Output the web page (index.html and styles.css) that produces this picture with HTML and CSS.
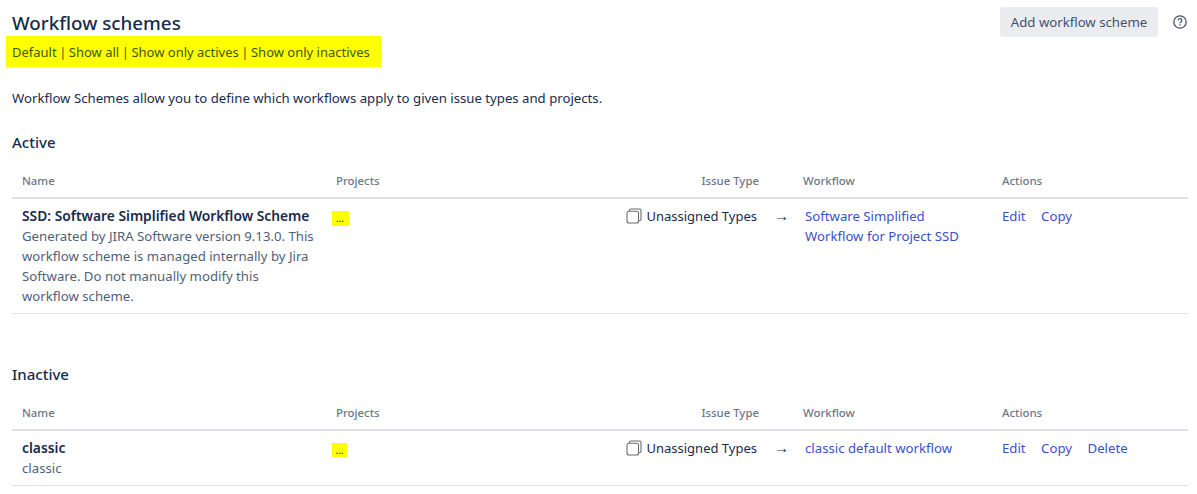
FILE: index.html
```html
<!DOCTYPE html>
<html lang="en">
<head>
  <meta charset="UTF-8">
  <title>Workflow schemes</title>
  <link rel="stylesheet" href="styles.css">
</head>
<body>

  <!-- Header -->
  <div class="page-header">
    <div class="header-main">
      <h1>Workflow schemes</h1>
      <div class="filters">
        <a href="#">Default</a><span class="sep">|</span><a href="#">Show all</a><span class="sep">|</span><a href="#">Show only actives</a><span class="sep">|</span><a href="#">Show only inactives</a>
      </div>
    </div>
    <div class="header-actions">
      <button class="add-btn">Add workflow scheme</button>
      <svg class="help-icon" width="16" height="16" viewBox="0 0 16 16" fill="none">
        <circle cx="8" cy="8" r="6.2" stroke="#42526e" stroke-width="1.3"/>
        <path d="M6.1 6.5c0-1.1.9-1.8 1.9-1.8s1.9.7 1.9 1.7c0 1.5-1.9 1.5-1.9 2.9" stroke="#42526e" stroke-width="1.2"/>
        <circle cx="8" cy="11" r=".8" fill="#42526e"/>
      </svg>
    </div>
  </div>

  <p class="intro">Workflow Schemes allow you to define which workflows apply to given issue types and projects.</p>

  <!-- Active -->
  <h2>Active</h2>
  <table>
    <thead>
      <tr>
        <th class="col-name">Name</th>
        <th class="col-projects">Projects</th>
        <th class="col-issue">Issue Type</th>
        <th class="col-arrow"></th>
        <th class="col-workflow">Workflow</th>
        <th class="col-actions">Actions</th>
      </tr>
    </thead>
    <tbody>
      <tr>
        <td>
          <strong>SSD: Software Simplified Workflow Scheme</strong>
          <div class="desc">Generated by JIRA Software version 9.13.0. This workflow scheme is managed internally by Jira Software. Do not manually modify this workflow scheme.</div>
        </td>
        <td class="projects"><span class="dots wide">...</span></td>
        <td class="issue">
          <span class="issue-type">
            <svg width="16" height="16" viewBox="0 0 16 16" fill="none" stroke="#6b6b6b" stroke-width="1.1">
              <rect x="1" y="3.2" width="11.5" height="11.8" rx="2"/>
              <path d="M3.4 3.1V2.6A1.6 1.6 0 0 1 5 1h8.4A1.6 1.6 0 0 1 15 2.6v8.6a1.6 1.6 0 0 1-1.6 1.5h-.8"/>
            </svg>
            Unassigned Types
          </span>
        </td>
        <td class="arrow">&rarr;</td>
        <td class="workflow"><a href="#">Software Simplified Workflow for Project SSD</a></td>
        <td class="actions"><a href="#">Edit</a><a href="#">Copy</a></td>
      </tr>
    </tbody>
  </table>

  <!-- Inactive -->
  <h2 class="inactive-title">Inactive</h2>
  <table>
    <thead>
      <tr>
        <th class="col-name">Name</th>
        <th class="col-projects">Projects</th>
        <th class="col-issue">Issue Type</th>
        <th class="col-arrow"></th>
        <th class="col-workflow">Workflow</th>
        <th class="col-actions">Actions</th>
      </tr>
    </thead>
    <tbody>
      <tr>
        <td>
          <strong>classic</strong>
          <div class="desc">classic</div>
        </td>
        <td class="projects"><span class="dots">...</span></td>
        <td class="issue">
          <span class="issue-type">
            <svg width="16" height="16" viewBox="0 0 16 16" fill="none" stroke="#6b6b6b" stroke-width="1.1">
              <rect x="1" y="3.2" width="11.5" height="11.8" rx="2"/>
              <path d="M3.4 3.1V2.6A1.6 1.6 0 0 1 5 1h8.4A1.6 1.6 0 0 1 15 2.6v8.6a1.6 1.6 0 0 1-1.6 1.5h-.8"/>
            </svg>
            Unassigned Types
          </span>
        </td>
        <td class="arrow">&rarr;</td>
        <td class="workflow"><a href="#">classic default workflow</a></td>
        <td class="actions"><a href="#">Edit</a><a href="#">Copy</a><a href="#">Delete</a></td>
      </tr>
    </tbody>
  </table>

</body>
</html>
```

FILE: styles.css
```css
* {
  box-sizing: border-box;
}
body {
  font-family: "Noto Sans", Arial, sans-serif;
  font-size: 13.2px;
  line-height: 20px;
  color: #172b4d;
  background: #fff;
  margin: 0;
  padding: 7px 9px 0 12px;
  overflow: hidden;
}
a {
  color: #3b51c9;
  text-decoration: none;
}
.page-header {
  display: flex;
  justify-content: space-between;
  align-items: flex-start;
}
h1 {
  font-size: 18.8px;
  font-weight: 500;
  line-height: 32px;
  margin: 0;
}
.filters {
  background: #ffff00;
  margin: -3px 0 0 -6px;
  padding: 6px 11px 5px 6px;
  font-size: 13px;
  color: #4a5a00;
}
.filters a {
  color: #3c5a00;
}
.sep {
  margin: 0 2.5px;
}
.header-actions {
  display: flex;
  align-items: center;
  gap: 14px;
}
.add-btn {
  font: inherit;
  color: #42526e;
  background: #ebecf0;
  border: none;
  border-radius: 3px;
  height: 30px;
  width: 158px;
  padding: 0;
}
.help-icon {
  display: block;
}
.intro {
  margin: 21px 0 0;
}
h2 {
  font-size: 15px;
  font-weight: 500;
  line-height: 20px;
  margin: 24px 0 0;
}
.inactive-title {
  margin-top: 50px;
}
table {
  width: 1176px;
  border-collapse: collapse;
  table-layout: fixed;
  margin-top: 9px;
}
th {
  font-size: 11.4px;
  font-weight: 500;
  color: #6b778c;
  text-align: left;
  padding: 10px 10px 6px;
  border-bottom: 2px solid #dfe1e6;
}
td {
  vertical-align: top;
  padding: 7px 10px;
  border-bottom: 1px solid #dfe1e6;
}
.col-name { width: 314px; }
.col-projects { width: 291px; }
.col-issue { width: 152px; text-align: right; }
.col-arrow { width: 24px; padding: 0; }
.col-workflow { width: 199px; }
strong {
  font-size: 13.8px;
  font-weight: 600;
}
.desc {
  color: #505f79;
}
.projects {
  padding-left: 6px;
}
.dots {
  display: inline-block;
  background: #ffff00;
  color: #172b4d;
  font-size: 10px;
  line-height: 14px;
  padding: 0 3.5px;
  margin-top: 5px;
  vertical-align: top;
}
.dots.wide {
  line-height: 15px;
  padding: 0 5px 0 4px;
}
.issue {
  text-align: right;
  padding-right: 12px;
  padding-left: 0;
  white-space: nowrap;
  font-size: 13px;
}
.issue-type svg {
  vertical-align: -3px;
  margin-right: 1px;
}
.arrow {
  padding: 7px 0 7px 5px;
  text-align: left;
  font-size: 15px;
  font-family: "Liberation Sans", sans-serif;
}
.workflow {
  padding-left: 12px;
}
.actions a {
  margin-right: 15.5px;
}
```
